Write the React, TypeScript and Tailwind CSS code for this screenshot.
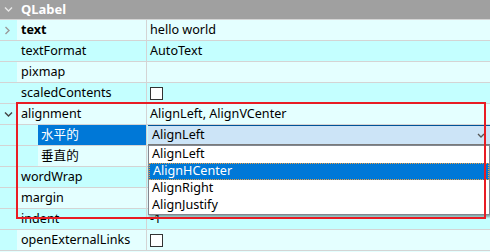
import React from "react";

const LIGHT = "bg-[#e4ffff]";
const CYAN = "bg-[#c4ffff]";

function Chevron({ dir, color }: { dir: "down" | "right"; color: string }) {
  return (
    <svg width="9" height="9" viewBox="0 0 9 9" className="block">
      {dir === "down" ? (
        <path d="M1 2.5 L4.5 6 L8 2.5" fill="none" stroke={color} strokeWidth="1.4" />
      ) : (
        <path d="M2.5 1 L6 4.5 L2.5 8" fill="none" stroke={color} strokeWidth="1.4" />
      )}
    </svg>
  );
}

function Checkbox() {
  return <div className="w-[13px] h-[13px] border border-[#333] bg-white" />;
}

type Row = {
  label: string;
  value?: React.ReactNode;
  bold?: boolean;
  arrow?: "down" | "right";
  sub?: boolean;
  selected?: boolean;
};

const rows: Row[] = [
  { label: "text", value: "hello world", bold: true, arrow: "right" },
  { label: "textFormat", value: "AutoText" },
  { label: "pixmap" },
  { label: "scaledContents", value: <Checkbox /> },
  { label: "alignment", value: "AlignLeft, AlignVCenter", arrow: "down" },
  { label: "水平的", sub: true, selected: true },
  { label: "垂直的", sub: true },
  { label: "wordWrap" },
  { label: "margin" },
  { label: "indent", value: "-1" },
  { label: "openExternalLinks", value: <Checkbox /> },
];

export default function App() {
  return (
    <div
      className="relative w-[490px] h-[252px] overflow-hidden bg-[#e4ffff] text-[12.6px] text-black"
      style={{ fontFamily: '"Noto Sans", "Noto Sans CJK SC", sans-serif' }}
    >
      {/* header */}
      <div className="h-[20px] bg-[#a0a0a0] border-b border-[#d4d4d4] flex items-center">
        <div className="w-[17px] flex justify-center">
          <Chevron dir="down" color="#e8e8e8" />
        </div>
        <span className="ml-[4px] font-bold text-white leading-none text-[13px]">QLabel</span>
      </div>
      {rows.map((r, i) => {
        const bg = i % 2 === 0 ? LIGHT : CYAN;
        return (
          <div key={i} className="h-[21px] flex border-b border-[#d4d4d4]">
            <div className={`${r.sub ? "w-[38px]" : "w-[17px]"} ${CYAN} flex items-center justify-center shrink-0`}>
              {r.arrow && (
                <div className={r.arrow === "right" ? "ml-[-2px]" : "ml-[-1px]"}>
                  <Chevron dir={r.arrow} color={r.arrow === "right" ? "#9a9a9a" : "#444"} />
                </div>
              )}
            </div>
            <div
              className={`${r.sub ? "w-[109px] pl-[3px]" : "w-[130px] pl-[4px]"} shrink-0 flex items-center border-r border-[#d4d4d4] ${
                r.selected ? "bg-[#0078d7] text-white" : bg
              } ${r.bold ? "font-bold" : ""}`}
            >
              {r.label}
            </div>
            <div className={`flex-1 flex items-center pl-[3px] ${bg}`}>{r.value}</div>
          </div>
        );
      })}

      {/* combobox editor */}
      <div className="absolute left-[148px] top-[125px] w-[342px] h-[20px] bg-[#cce4f7] border-t border-[#005499] border-b border-b-[#7a7a7a] flex items-center pl-[4px]">
        <span>AlignLeft</span>
        <div className="ml-auto mr-[5px] mt-[2px]">
          <svg width="8" height="6" viewBox="0 0 8 6">
            <path d="M1 1 L4 4 L7 1" fill="none" stroke="#555" strokeWidth="1.3" />
          </svg>
        </div>
      </div>

      {/* dropdown list */}
      <div className="absolute left-[148px] top-[145px] w-[342px] h-[70px] bg-white border border-[#828790] shadow-[1px_2px_2px_rgba(0,0,0,0.35)] flex flex-col">
        <div className="h-[17px] flex items-center pl-[3px]">AlignLeft</div>
        <div className="h-[17px] flex items-center pl-[3px] bg-[#0078d7] text-white border border-dotted border-[#f0a040]">
          AlignHCenter
        </div>
        <div className="h-[17px] flex items-center pl-[3px]">AlignRight</div>
        <div className="h-[17px] flex items-center pl-[3px]">AlignJustify</div>
      </div>

      {/* red annotation rectangle */}
      <div className="absolute left-[16px] top-[102px] w-[470px] h-[117px] border-2 border-[#e81c24] pointer-events-none" />
    </div>
  );
}
